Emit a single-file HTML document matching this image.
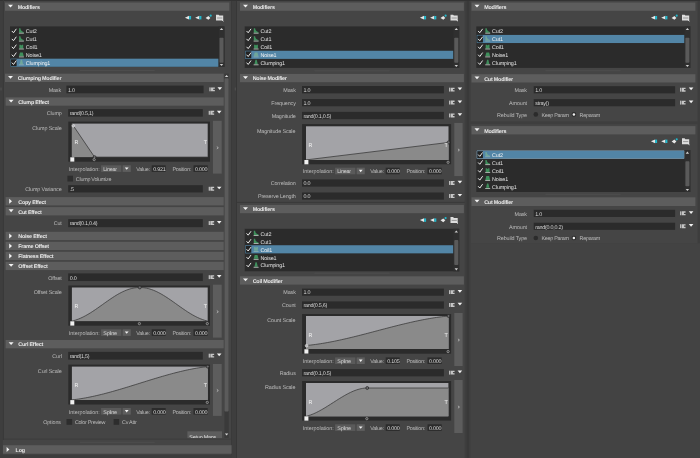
<!DOCTYPE html>
<html lang="en">
<head>
<meta charset="utf-8">
<title>XGen Modifiers</title>
<style>
html,body{margin:0;padding:0;background:#454545;}
body{width:700px;height:458px;overflow:hidden;position:relative;font-family:"Liberation Sans",sans-serif;}
#shapes{position:absolute;left:-6px;top:-6px;width:712px;height:470px;display:block;filter:blur(0.4px);}
#labels{position:absolute;left:0;top:0;width:700px;height:458px;overflow:hidden;will-change:transform;filter:blur(0.3px);}
.t{position:absolute;white-space:nowrap;line-height:8px;height:8px;font-size:5.4px;letter-spacing:-0.25px;
   font-family:"Liberation Sans",sans-serif;text-rendering:geometricPrecision;}
</style>
</head>
<body>
<svg id="shapes" width="712" height="470" viewBox="-6 -6 712 470">
<rect x="-6" y="-6" width="712" height="470" fill="#454545"/>
<rect x="-6" y="-6" width="712" height="7" fill="#333333"/>
<rect x="-6" y="1" width="8.7" height="463" fill="#3e3e3e"/>
<rect x="2.7" y="0" width="1.3" height="440" fill="#393939"/>
<rect x="231" y="1" width="6" height="463" fill="#3e3e3e"/>
<rect x="231" y="1" width="1" height="463" fill="#3a3a3a"/>
<rect x="236" y="1" width="1" height="463" fill="#373737"/>
<rect x="464.7" y="1" width="5.9" height="463" fill="#3e3e3e"/>
<rect x="466.8" y="1" width="2.2" height="463" fill="#393939"/>
<rect x="697.6" y="1" width="8.4" height="244" fill="#3d3d3d"/>
<rect x="234.8" y="87.5" width="0.8" height="3" fill="#585858"/>
<rect x="0.6" y="87.5" width="0.8" height="3" fill="#585858"/>
<rect x="5" y="2.5" width="224.3" height="8.3" fill="#5d5d5d"/>
<polygon points="8,4.75 13,4.75 10.5,7.55" fill="#f2f2f2"/>
<polygon points="184.9,17.7 189.1,15.8 189.1,19.6" fill="#e8e8e8"/>
<rect x="189.1" y="16" width="2" height="3.4" fill="#22b8cc"/>
<polygon points="195.2,17.7 199.4,15.8 199.4,19.6" fill="#e8e8e8"/>
<rect x="199.4" y="16" width="2" height="3.4" fill="#22b8cc"/>
<polygon points="205.6,17.9 208.4,16 210.4,17.9 208.4,19.8" fill="#e8e8e8"/>
<circle cx="210.7" cy="15.7" r="1.1" fill="#22b8cc" stroke="none" stroke-width="0.6"/>
<path d="M216 14.7 h2.6 l0.8 0.9 h3.8 v5 h-7.2 z" fill="#dddddd" stroke="none" stroke-width="0.6"/>
<path d="M217.1 18 h5.2" fill="none" stroke="#777" stroke-width="0.7"/>
<path d="M221.9 19.8 l1.6 1.4" fill="none" stroke="#eee" stroke-width="0.9"/>
<rect x="10" y="26.4" width="214.4" height="40.6" fill="#2b2b2b"/>
<path d="M12.1 31.26 l1.4 1.5 l2.6 -3.6" fill="none" stroke="#f4f4f4" stroke-width="0.95" stroke-linecap="round" stroke-linejoin="round"/>
<path d="M19.1 28.36 h1.3 q0.4 3.2 3.4 3.8 v0.5 h-4.7 z" fill="#3f8f5c" stroke="none" stroke-width="0.6"/>
<rect x="18.9" y="32.76" width="5" height="0.8" fill="#c4ccc6"/>
<path d="M12.1 39.18 l1.4 1.5 l2.6 -3.6" fill="none" stroke="#f4f4f4" stroke-width="0.95" stroke-linecap="round" stroke-linejoin="round"/>
<path d="M19.1 36.28 h1.3 q0.4 3.2 3.4 3.8 v0.5 h-4.7 z" fill="#3f8f5c" stroke="none" stroke-width="0.6"/>
<rect x="18.9" y="40.68" width="5" height="0.8" fill="#c4ccc6"/>
<path d="M12.1 47.1 l1.4 1.5 l2.6 -3.6" fill="none" stroke="#f4f4f4" stroke-width="0.95" stroke-linecap="round" stroke-linejoin="round"/>
<path d="M19.4 44.7 h1.2 l0.7 0.9 l0.7 -0.9 h1.2 v3.7 h-3.8 z" fill="#3f8f5c" stroke="none" stroke-width="0.6"/>
<rect x="18.9" y="48.6" width="5" height="0.8" fill="#c4ccc6"/>
<path d="M12.1 55.02 l1.4 1.5 l2.6 -3.6" fill="none" stroke="#f4f4f4" stroke-width="0.95" stroke-linecap="round" stroke-linejoin="round"/>
<polygon points="20,52.52 22.8,52.52 23.8,56.32 19,56.32" fill="#3f8f5c"/>
<rect x="18.9" y="56.52" width="5" height="0.8" fill="#c4ccc6"/>
<rect x="10.5" y="58.68" width="208.1" height="8.12" fill="#5285a6"/>
<rect x="11" y="59.28" width="5.6" height="6.92" fill="#222222"/>
<path d="M12.1 62.94 l1.4 1.5 l2.6 -3.6" fill="none" stroke="#f4f4f4" stroke-width="0.95" stroke-linecap="round" stroke-linejoin="round"/>
<polygon points="20.8,59.84 22,59.84 23.1,64.24 19.7,64.24" fill="#6fa79a"/>
<rect x="18.9" y="64.44" width="5" height="0.8" fill="#8fb0b4"/>
<rect x="218.6" y="26.4" width="5.8" height="40.6" fill="#2f2f2f"/>
<polygon points="219.8,30.1 223.2,30.1 221.5,28" fill="#d0d0d0"/>
<polygon points="219.8,64 223.2,64 221.5,66.1" fill="#d0d0d0"/>
<rect x="219.5" y="37.7" width="4" height="25" fill="#5a5a5a" rx="0.8"/>
<rect x="79.7" y="69.9" width="75" height="1" fill="#4e4e4e"/>
<rect x="224.4" y="73.6" width="4.3" height="364.4" fill="#3a3a3a"/>
<rect x="224.5" y="78.2" width="4.1" height="333.4" fill="#5b5b5b" rx="0.8"/>
<polygon points="224.9,76.9 228.3,76.9 226.6,74.9" fill="#d8d8d8"/>
<polygon points="224.9,433.4 228.3,433.4 226.6,435.6" fill="#d8d8d8"/>
<rect x="5" y="73.7" width="218.7" height="8.3" fill="#5d5d5d"/>
<polygon points="8,75.95 13,75.95 10.5,78.75" fill="#f2f2f2"/>
<rect x="66.4" y="85.6" width="137.2" height="7.65" fill="#2b2b2b"/>
<rect x="209.4" y="87.4" width="1.2" height="3.9" fill="#c6c6c6"/>
<path d="M211.05 87.4 h3.8 v1.3 h-1.6 v1.3 h1.6 v1.3 h-3.8 z" fill="#c6c6c6" stroke="none" stroke-width="0.6"/>
<polygon points="217.5,87.25 222.1,87.25 219.8,89.95" fill="#f2f2f2"/>
<rect x="5.6" y="97.4" width="218.1" height="8.3" fill="#5d5d5d"/>
<polygon points="8.6,99.65 13.6,99.65 11.1,102.45" fill="#f2f2f2"/>
<rect x="68.2" y="109.1" width="134.6" height="7.55" fill="#2b2b2b"/>
<rect x="208.7" y="110.85" width="1.2" height="3.9" fill="#c6c6c6"/>
<path d="M210.35 110.85 h3.8 v1.3 h-1.6 v1.3 h1.6 v1.3 h-3.8 z" fill="#c6c6c6" stroke="none" stroke-width="0.6"/>
<polygon points="216.9,110.7 221.5,110.7 219.2,113.4" fill="#f2f2f2"/>
<rect x="68.3" y="121.6" width="141.7" height="40.1" fill="#2b2b2b"/>
<rect x="71.9" y="123.6" width="135.8" height="33.5" fill="#a3a3a7"/>
<polygon points="71.9,123.6 94.58,157.1 207.7,157.1 207.7,157.1 71.9,157.1" fill="#8a8a8a"/>
<polyline points="71.9,123.6 94.58,157.1 207.7,157.1" fill="none" stroke="#2e2e2e" stroke-width="0.7"/>
<circle cx="73.3" cy="125.8" r="1.35" fill="#b9b9bc" stroke="#e4e4e4" stroke-width="0.6"/>
<circle cx="94.58" cy="157.1" r="1.45" fill="#6e6e70" stroke="#242424" stroke-width="0.7"/>
<rect x="70.3" y="157.3" width="4" height="4.3" fill="#f0f0f0"/>
<circle cx="94.18" cy="159.6" r="1.15" fill="#3a3a3a" stroke="#c8c8c8" stroke-width="0.55"/>
<rect x="212.9" y="120.8" width="8.8" height="52.8" fill="#5d5d5d"/>
<path d="M216.8 146.6 l1.5 1.15 l-1.5 1.15" fill="none" stroke="#e0e0e0" stroke-width="0.6"/>
<rect x="101.1" y="165.3" width="20.2" height="6.6" fill="#5a5a5a"/>
<rect x="121.3" y="165.3" width="1.6" height="6.6" fill="#4e4e4e"/>
<rect x="122.9" y="165.3" width="7.9" height="6.6" fill="#5e5e5e"/>
<polygon points="124.8,167.4 128.6,167.4 126.7,169.8" fill="#f2f2f2"/>
<rect x="151.7" y="165.3" width="14" height="6.6" fill="#2b2b2b"/>
<rect x="193.5" y="165.3" width="14.2" height="6.6" fill="#2b2b2b"/>
<rect x="67.4" y="175.7" width="5.6" height="5.8" fill="#2d2d2d"/>
<rect x="68.2" y="185.2" width="134.6" height="7.25" fill="#2b2b2b"/>
<rect x="208.7" y="186.8" width="1.2" height="3.9" fill="#c6c6c6"/>
<path d="M210.35 186.8 h3.8 v1.3 h-1.6 v1.3 h1.6 v1.3 h-3.8 z" fill="#c6c6c6" stroke="none" stroke-width="0.6"/>
<polygon points="216.9,186.65 221.5,186.65 219.2,189.35" fill="#f2f2f2"/>
<rect x="5.6" y="197.1" width="218.1" height="8.3" fill="#5d5d5d"/>
<polygon points="9.2,198.75 12,201.25 9.2,203.75" fill="#f2f2f2"/>
<rect x="5.6" y="207.1" width="218.1" height="8.3" fill="#5d5d5d"/>
<polygon points="8.6,209.35 13.6,209.35 11.1,212.15" fill="#f2f2f2"/>
<rect x="68.2" y="219.1" width="134.6" height="8.05" fill="#2b2b2b"/>
<rect x="208.7" y="221.1" width="1.2" height="3.9" fill="#c6c6c6"/>
<path d="M210.35 221.1 h3.8 v1.3 h-1.6 v1.3 h1.6 v1.3 h-3.8 z" fill="#c6c6c6" stroke="none" stroke-width="0.6"/>
<polygon points="216.9,220.95 221.5,220.95 219.2,223.65" fill="#f2f2f2"/>
<rect x="5.6" y="231.8" width="218.1" height="8.3" fill="#5d5d5d"/>
<polygon points="9.2,233.45 12,235.95 9.2,238.45" fill="#f2f2f2"/>
<rect x="5.6" y="241.8" width="218.1" height="8.3" fill="#5d5d5d"/>
<polygon points="9.2,243.45 12,245.95 9.2,248.45" fill="#f2f2f2"/>
<rect x="5.6" y="251.8" width="218.1" height="8.3" fill="#5d5d5d"/>
<polygon points="9.2,253.45 12,255.95 9.2,258.45" fill="#f2f2f2"/>
<rect x="5.6" y="261.8" width="218.1" height="8.3" fill="#5d5d5d"/>
<polygon points="8.6,264.05 13.6,264.05 11.1,266.85" fill="#f2f2f2"/>
<rect x="68.2" y="273.4" width="134.6" height="7.65" fill="#2b2b2b"/>
<rect x="208.7" y="275.2" width="1.2" height="3.9" fill="#c6c6c6"/>
<path d="M210.35 275.2 h3.8 v1.3 h-1.6 v1.3 h1.6 v1.3 h-3.8 z" fill="#c6c6c6" stroke="none" stroke-width="0.6"/>
<polygon points="216.9,275.05 221.5,275.05 219.2,277.75" fill="#f2f2f2"/>
<rect x="68.3" y="285.5" width="141.7" height="40.2" fill="#2b2b2b"/>
<rect x="71.9" y="287.5" width="135.8" height="33.6" fill="#a3a3a7"/>
<polygon points="71.9,321.1 73.6,320.67 75.29,320.16 76.99,319.59 78.69,318.95 80.39,318.24 82.08,317.47 83.78,316.63 85.48,315.74 87.18,314.79 88.88,313.8 90.57,312.76 92.27,311.68 93.97,310.56 95.66,309.41 97.36,308.24 99.06,307.05 100.76,305.84 102.45,304.63 104.15,303.42 105.85,302.21 107.55,301.02 109.25,299.84 110.94,298.68 112.64,297.55 114.34,296.46 116.03,295.41 117.73,294.4 119.43,293.45 121.13,292.55 122.82,291.71 124.52,290.94 126.22,290.24 127.92,289.61 129.62,289.06 131.31,288.59 133.01,288.2 134.71,287.89 136.4,287.68 138.1,287.54 139.8,287.5 141.5,287.54 143.19,287.68 144.89,287.89 146.59,288.2 148.29,288.59 149.98,289.06 151.68,289.61 153.38,290.24 155.08,290.94 156.77,291.71 158.47,292.55 160.17,293.45 161.87,294.4 163.56,295.41 165.26,296.46 166.96,297.55 168.66,298.68 170.35,299.84 172.05,301.02 173.75,302.21 175.45,303.42 177.15,304.63 178.84,305.84 180.54,307.05 182.24,308.24 183.94,309.41 185.63,310.56 187.33,311.68 189.03,312.76 190.73,313.8 192.42,314.79 194.12,315.74 195.82,316.63 197.52,317.47 199.21,318.24 200.91,318.95 202.61,319.59 204.31,320.16 206,320.67 207.7,321.1 207.7,321.1 71.9,321.1" fill="#8a8a8a"/>
<polyline points="71.9,321.1 73.6,320.67 75.29,320.16 76.99,319.59 78.69,318.95 80.39,318.24 82.08,317.47 83.78,316.63 85.48,315.74 87.18,314.79 88.88,313.8 90.57,312.76 92.27,311.68 93.97,310.56 95.66,309.41 97.36,308.24 99.06,307.05 100.76,305.84 102.45,304.63 104.15,303.42 105.85,302.21 107.55,301.02 109.25,299.84 110.94,298.68 112.64,297.55 114.34,296.46 116.03,295.41 117.73,294.4 119.43,293.45 121.13,292.55 122.82,291.71 124.52,290.94 126.22,290.24 127.92,289.61 129.62,289.06 131.31,288.59 133.01,288.2 134.71,287.89 136.4,287.68 138.1,287.54 139.8,287.5 141.5,287.54 143.19,287.68 144.89,287.89 146.59,288.2 148.29,288.59 149.98,289.06 151.68,289.61 153.38,290.24 155.08,290.94 156.77,291.71 158.47,292.55 160.17,293.45 161.87,294.4 163.56,295.41 165.26,296.46 166.96,297.55 168.66,298.68 170.35,299.84 172.05,301.02 173.75,302.21 175.45,303.42 177.15,304.63 178.84,305.84 180.54,307.05 182.24,308.24 183.94,309.41 185.63,310.56 187.33,311.68 189.03,312.76 190.73,313.8 192.42,314.79 194.12,315.74 195.82,316.63 197.52,317.47 199.21,318.24 200.91,318.95 202.61,319.59 204.31,320.16 206,320.67 207.7,321.1" fill="none" stroke="#2e2e2e" stroke-width="0.7"/>
<circle cx="139.8" cy="287.5" r="1.45" fill="#6e6e70" stroke="#242424" stroke-width="0.7"/>
<rect x="70.3" y="321.3" width="4" height="4.3" fill="#f0f0f0"/>
<circle cx="139.4" cy="323.6" r="1.15" fill="#3a3a3a" stroke="#c8c8c8" stroke-width="0.55"/>
<circle cx="207.3" cy="323.6" r="1.15" fill="#3a3a3a" stroke="#c8c8c8" stroke-width="0.55"/>
<rect x="212.9" y="284.7" width="8.8" height="52.9" fill="#5d5d5d"/>
<path d="M216.8 310.55 l1.5 1.15 l-1.5 1.15" fill="none" stroke="#e0e0e0" stroke-width="0.6"/>
<rect x="101.1" y="329.3" width="20.2" height="6.6" fill="#5a5a5a"/>
<rect x="121.3" y="329.3" width="1.6" height="6.6" fill="#4e4e4e"/>
<rect x="122.9" y="329.3" width="7.9" height="6.6" fill="#5e5e5e"/>
<polygon points="124.8,331.4 128.6,331.4 126.7,333.8" fill="#f2f2f2"/>
<rect x="151.7" y="329.3" width="14" height="6.6" fill="#2b2b2b"/>
<rect x="193.5" y="329.3" width="14.2" height="6.6" fill="#2b2b2b"/>
<rect x="5.6" y="340" width="218.1" height="8.3" fill="#5d5d5d"/>
<polygon points="8.6,342.25 13.6,342.25 11.1,345.05" fill="#f2f2f2"/>
<rect x="68.2" y="351.9" width="134.6" height="7.65" fill="#2b2b2b"/>
<rect x="208.7" y="353.7" width="1.2" height="3.9" fill="#c6c6c6"/>
<path d="M210.35 353.7 h3.8 v1.3 h-1.6 v1.3 h1.6 v1.3 h-3.8 z" fill="#c6c6c6" stroke="none" stroke-width="0.6"/>
<polygon points="216.9,353.55 221.5,353.55 219.2,356.25" fill="#f2f2f2"/>
<rect x="68.3" y="364.6" width="141.7" height="39.9" fill="#2b2b2b"/>
<rect x="71.9" y="366.6" width="135.8" height="33.3" fill="#a3a3a7"/>
<polygon points="71.9,399.9 74.16,399.64 76.43,399.34 78.69,399.02 80.95,398.67 83.22,398.29 85.48,397.89 87.74,397.46 90.01,397.01 92.27,396.54 94.53,396.05 96.8,395.53 99.06,395 101.32,394.45 103.59,393.88 105.85,393.29 108.11,392.69 110.38,392.08 112.64,391.45 114.9,390.81 117.17,390.16 119.43,389.49 121.69,388.82 123.96,388.15 126.22,387.46 128.48,386.77 130.75,386.07 133.01,385.37 135.27,384.66 137.54,383.96 139.8,383.25 142.06,382.54 144.33,381.84 146.59,381.13 148.85,380.43 151.12,379.73 153.38,379.04 155.64,378.35 157.91,377.68 160.17,377.01 162.43,376.34 164.7,375.69 166.96,375.05 169.22,374.42 171.49,373.81 173.75,373.21 176.01,372.62 178.28,372.05 180.54,371.5 182.8,370.97 185.07,370.45 187.33,369.96 189.59,369.49 191.86,369.04 194.12,368.61 196.38,368.21 198.65,367.83 200.91,367.48 203.17,367.16 205.44,366.86 207.7,366.6 207.7,399.9 71.9,399.9" fill="#8a8a8a"/>
<polyline points="71.9,399.9 74.16,399.64 76.43,399.34 78.69,399.02 80.95,398.67 83.22,398.29 85.48,397.89 87.74,397.46 90.01,397.01 92.27,396.54 94.53,396.05 96.8,395.53 99.06,395 101.32,394.45 103.59,393.88 105.85,393.29 108.11,392.69 110.38,392.08 112.64,391.45 114.9,390.81 117.17,390.16 119.43,389.49 121.69,388.82 123.96,388.15 126.22,387.46 128.48,386.77 130.75,386.07 133.01,385.37 135.27,384.66 137.54,383.96 139.8,383.25 142.06,382.54 144.33,381.84 146.59,381.13 148.85,380.43 151.12,379.73 153.38,379.04 155.64,378.35 157.91,377.68 160.17,377.01 162.43,376.34 164.7,375.69 166.96,375.05 169.22,374.42 171.49,373.81 173.75,373.21 176.01,372.62 178.28,372.05 180.54,371.5 182.8,370.97 185.07,370.45 187.33,369.96 189.59,369.49 191.86,369.04 194.12,368.61 196.38,368.21 198.65,367.83 200.91,367.48 203.17,367.16 205.44,366.86 207.7,366.6" fill="none" stroke="#2e2e2e" stroke-width="0.7"/>
<circle cx="207.7" cy="366.6" r="1.45" fill="#6e6e70" stroke="#242424" stroke-width="0.7"/>
<rect x="70.3" y="400.1" width="4" height="4.3" fill="#f0f0f0"/>
<circle cx="207.3" cy="402.4" r="1.15" fill="#3a3a3a" stroke="#c8c8c8" stroke-width="0.55"/>
<rect x="212.9" y="364" width="8.8" height="51.9" fill="#5d5d5d"/>
<path d="M216.8 389.35 l1.5 1.15 l-1.5 1.15" fill="none" stroke="#e0e0e0" stroke-width="0.6"/>
<rect x="101.1" y="408" width="20.2" height="6.6" fill="#5a5a5a"/>
<rect x="121.3" y="408" width="1.6" height="6.6" fill="#4e4e4e"/>
<rect x="122.9" y="408" width="7.9" height="6.6" fill="#5e5e5e"/>
<polygon points="124.8,410.1 128.6,410.1 126.7,412.5" fill="#f2f2f2"/>
<rect x="151.7" y="408" width="14" height="6.6" fill="#2b2b2b"/>
<rect x="193.5" y="408" width="14.2" height="6.6" fill="#2b2b2b"/>
<rect x="66.5" y="419" width="5.6" height="5.8" fill="#2d2d2d"/>
<rect x="113.6" y="419" width="5.6" height="5.8" fill="#2d2d2d"/>
<rect x="187.4" y="431.3" width="34.6" height="6.9" fill="#5d5d5d"/>
<rect x="4" y="438.6" width="226.6" height="1" fill="#3c3c3c"/>
<rect x="79.7" y="441.8" width="75" height="1" fill="#4e4e4e"/>
<rect x="3" y="445.2" width="228.6" height="8.5" fill="#5d5d5d"/>
<polygon points="6.6,446.95 9.4,449.45 6.6,451.95" fill="#f2f2f2"/>
<rect x="-6" y="454.6" width="238" height="9.4" fill="#3c3c3c"/>
<rect x="240" y="2.5" width="223.9" height="8.3" fill="#5d5d5d"/>
<polygon points="243,4.75 248,4.75 245.5,7.55" fill="#f2f2f2"/>
<polygon points="419.9,17.7 424.1,15.8 424.1,19.6" fill="#e8e8e8"/>
<rect x="424.1" y="16" width="2" height="3.4" fill="#22b8cc"/>
<polygon points="430.1,17.7 434.3,15.8 434.3,19.6" fill="#e8e8e8"/>
<rect x="434.3" y="16" width="2" height="3.4" fill="#22b8cc"/>
<polygon points="440.5,17.9 443.3,16 445.3,17.9 443.3,19.8" fill="#e8e8e8"/>
<circle cx="445.6" cy="15.7" r="1.1" fill="#22b8cc" stroke="none" stroke-width="0.6"/>
<path d="M450.5 14.7 h2.6 l0.8 0.9 h3.8 v5 h-7.2 z" fill="#dddddd" stroke="none" stroke-width="0.6"/>
<path d="M451.6 18 h5.2" fill="none" stroke="#777" stroke-width="0.7"/>
<path d="M456.4 19.8 l1.6 1.4" fill="none" stroke="#eee" stroke-width="0.9"/>
<rect x="244.7" y="26.4" width="214.5" height="41.5" fill="#2b2b2b"/>
<path d="M246.8 31.26 l1.4 1.5 l2.6 -3.6" fill="none" stroke="#f4f4f4" stroke-width="0.95" stroke-linecap="round" stroke-linejoin="round"/>
<path d="M253.8 28.36 h1.3 q0.4 3.2 3.4 3.8 v0.5 h-4.7 z" fill="#3f8f5c" stroke="none" stroke-width="0.6"/>
<rect x="253.6" y="32.76" width="5" height="0.8" fill="#c4ccc6"/>
<path d="M246.8 39.18 l1.4 1.5 l2.6 -3.6" fill="none" stroke="#f4f4f4" stroke-width="0.95" stroke-linecap="round" stroke-linejoin="round"/>
<path d="M253.8 36.28 h1.3 q0.4 3.2 3.4 3.8 v0.5 h-4.7 z" fill="#3f8f5c" stroke="none" stroke-width="0.6"/>
<rect x="253.6" y="40.68" width="5" height="0.8" fill="#c4ccc6"/>
<path d="M246.8 47.1 l1.4 1.5 l2.6 -3.6" fill="none" stroke="#f4f4f4" stroke-width="0.95" stroke-linecap="round" stroke-linejoin="round"/>
<path d="M254.1 44.7 h1.2 l0.7 0.9 l0.7 -0.9 h1.2 v3.7 h-3.8 z" fill="#3f8f5c" stroke="none" stroke-width="0.6"/>
<rect x="253.6" y="48.6" width="5" height="0.8" fill="#c4ccc6"/>
<rect x="245.2" y="50.76" width="208.2" height="8.12" fill="#5285a6"/>
<rect x="245.7" y="51.36" width="5.6" height="6.92" fill="#222222"/>
<path d="M246.8 55.02 l1.4 1.5 l2.6 -3.6" fill="none" stroke="#f4f4f4" stroke-width="0.95" stroke-linecap="round" stroke-linejoin="round"/>
<polygon points="254.7,52.52 257.5,52.52 258.5,56.32 253.7,56.32" fill="#6fa79a"/>
<rect x="253.6" y="56.52" width="5" height="0.8" fill="#8fb0b4"/>
<path d="M246.8 62.94 l1.4 1.5 l2.6 -3.6" fill="none" stroke="#f4f4f4" stroke-width="0.95" stroke-linecap="round" stroke-linejoin="round"/>
<polygon points="255.5,59.84 256.7,59.84 257.8,64.24 254.4,64.24" fill="#3f8f5c"/>
<rect x="253.6" y="64.44" width="5" height="0.8" fill="#c4ccc6"/>
<rect x="453.4" y="26.4" width="5.8" height="41.5" fill="#2f2f2f"/>
<polygon points="454.6,30.1 458,30.1 456.3,28" fill="#d0d0d0"/>
<polygon points="454.6,64.9 458,64.9 456.3,67" fill="#d0d0d0"/>
<rect x="454.3" y="37.7" width="4" height="25" fill="#5a5a5a" rx="0.8"/>
<rect x="314.5" y="70.3" width="75" height="1" fill="#4e4e4e"/>
<rect x="240" y="73.9" width="223.9" height="8.3" fill="#5d5d5d"/>
<polygon points="243,76.15 248,76.15 245.5,78.95" fill="#f2f2f2"/>
<rect x="302" y="86" width="141.9" height="7.35" fill="#2b2b2b"/>
<rect x="449.1" y="87.65" width="1.2" height="3.9" fill="#c6c6c6"/>
<path d="M450.75 87.65 h3.8 v1.3 h-1.6 v1.3 h1.6 v1.3 h-3.8 z" fill="#c6c6c6" stroke="none" stroke-width="0.6"/>
<polygon points="457.6,87.5 462.2,87.5 459.9,90.2" fill="#f2f2f2"/>
<rect x="302" y="99" width="141.9" height="7.25" fill="#2b2b2b"/>
<rect x="449.1" y="100.6" width="1.2" height="3.9" fill="#c6c6c6"/>
<path d="M450.75 100.6 h3.8 v1.3 h-1.6 v1.3 h1.6 v1.3 h-3.8 z" fill="#c6c6c6" stroke="none" stroke-width="0.6"/>
<polygon points="457.6,100.45 462.2,100.45 459.9,103.15" fill="#f2f2f2"/>
<rect x="302" y="111.9" width="141.9" height="7.25" fill="#2b2b2b"/>
<rect x="449.1" y="113.5" width="1.2" height="3.9" fill="#c6c6c6"/>
<path d="M450.75 113.5 h3.8 v1.3 h-1.6 v1.3 h1.6 v1.3 h-3.8 z" fill="#c6c6c6" stroke="none" stroke-width="0.6"/>
<polygon points="457.6,113.35 462.2,113.35 459.9,116.05" fill="#f2f2f2"/>
<rect x="302.1" y="124.1" width="149" height="40.2" fill="#2b2b2b"/>
<rect x="306" y="126.3" width="142.5" height="33.6" fill="#a3a3a7"/>
<polygon points="306,159.9 448.5,142.43 448.5,159.9 306,159.9" fill="#8a8a8a"/>
<polyline points="306,159.9 448.5,142.43" fill="none" stroke="#2e2e2e" stroke-width="0.7"/>
<circle cx="448.5" cy="142.43" r="1.45" fill="#6e6e70" stroke="#242424" stroke-width="0.7"/>
<rect x="304.4" y="160" width="4" height="4.3" fill="#f0f0f0"/>
<circle cx="448.1" cy="162.3" r="1.15" fill="#3a3a3a" stroke="#c8c8c8" stroke-width="0.55"/>
<rect x="454.3" y="122.9" width="8.3" height="53.2" fill="#5d5d5d"/>
<path d="M457.95 148.9 l1.5 1.15 l-1.5 1.15" fill="none" stroke="#e0e0e0" stroke-width="0.6"/>
<rect x="335.1" y="167.7" width="20.2" height="6.6" fill="#5a5a5a"/>
<rect x="355.3" y="167.7" width="1.6" height="6.6" fill="#4e4e4e"/>
<rect x="356.9" y="167.7" width="7.9" height="6.6" fill="#5e5e5e"/>
<polygon points="358.8,169.8 362.6,169.8 360.7,172.2" fill="#f2f2f2"/>
<rect x="385.7" y="167.7" width="14" height="6.6" fill="#2b2b2b"/>
<rect x="427.5" y="167.7" width="14.2" height="6.6" fill="#2b2b2b"/>
<rect x="302" y="179.4" width="141.9" height="7.25" fill="#2b2b2b"/>
<rect x="449.1" y="181" width="1.2" height="3.9" fill="#c6c6c6"/>
<path d="M450.75 181 h3.8 v1.3 h-1.6 v1.3 h1.6 v1.3 h-3.8 z" fill="#c6c6c6" stroke="none" stroke-width="0.6"/>
<polygon points="457.6,180.85 462.2,180.85 459.9,183.55" fill="#f2f2f2"/>
<rect x="302" y="192.5" width="141.9" height="7.15" fill="#2b2b2b"/>
<rect x="449.1" y="194.05" width="1.2" height="3.9" fill="#c6c6c6"/>
<path d="M450.75 194.05 h3.8 v1.3 h-1.6 v1.3 h1.6 v1.3 h-3.8 z" fill="#c6c6c6" stroke="none" stroke-width="0.6"/>
<polygon points="457.6,193.9 462.2,193.9 459.9,196.6" fill="#f2f2f2"/>
<rect x="237" y="201.9" width="227.8" height="0.9" fill="#393939"/>
<rect x="240" y="204.9" width="223.9" height="8.3" fill="#5d5d5d"/>
<polygon points="243,207.15 248,207.15 245.5,209.95" fill="#f2f2f2"/>
<polygon points="419.9,220.1 424.1,218.2 424.1,222" fill="#e8e8e8"/>
<rect x="424.1" y="218.4" width="2" height="3.4" fill="#22b8cc"/>
<polygon points="430.1,220.1 434.3,218.2 434.3,222" fill="#e8e8e8"/>
<rect x="434.3" y="218.4" width="2" height="3.4" fill="#22b8cc"/>
<polygon points="440.5,220.3 443.3,218.4 445.3,220.3 443.3,222.2" fill="#e8e8e8"/>
<circle cx="445.6" cy="218.1" r="1.1" fill="#22b8cc" stroke="none" stroke-width="0.6"/>
<path d="M450.5 217.1 h2.6 l0.8 0.9 h3.8 v5 h-7.2 z" fill="#dddddd" stroke="none" stroke-width="0.6"/>
<path d="M451.6 220.4 h5.2" fill="none" stroke="#777" stroke-width="0.7"/>
<path d="M456.4 222.2 l1.6 1.4" fill="none" stroke="#eee" stroke-width="0.9"/>
<rect x="244.7" y="228.8" width="214.5" height="42.5" fill="#2b2b2b"/>
<path d="M246.8 233.66 l1.4 1.5 l2.6 -3.6" fill="none" stroke="#f4f4f4" stroke-width="0.95" stroke-linecap="round" stroke-linejoin="round"/>
<path d="M253.8 230.76 h1.3 q0.4 3.2 3.4 3.8 v0.5 h-4.7 z" fill="#3f8f5c" stroke="none" stroke-width="0.6"/>
<rect x="253.6" y="235.16" width="5" height="0.8" fill="#c4ccc6"/>
<path d="M246.8 241.58 l1.4 1.5 l2.6 -3.6" fill="none" stroke="#f4f4f4" stroke-width="0.95" stroke-linecap="round" stroke-linejoin="round"/>
<path d="M253.8 238.68 h1.3 q0.4 3.2 3.4 3.8 v0.5 h-4.7 z" fill="#3f8f5c" stroke="none" stroke-width="0.6"/>
<rect x="253.6" y="243.08" width="5" height="0.8" fill="#c4ccc6"/>
<rect x="245.2" y="245.24" width="208.2" height="8.12" fill="#5285a6"/>
<rect x="245.7" y="245.84" width="5.6" height="6.92" fill="#222222"/>
<path d="M246.8 249.5 l1.4 1.5 l2.6 -3.6" fill="none" stroke="#f4f4f4" stroke-width="0.95" stroke-linecap="round" stroke-linejoin="round"/>
<path d="M254.1 247.1 h1.2 l0.7 0.9 l0.7 -0.9 h1.2 v3.7 h-3.8 z" fill="#6fa79a" stroke="none" stroke-width="0.6"/>
<rect x="253.6" y="251" width="5" height="0.8" fill="#8fb0b4"/>
<path d="M246.8 257.42 l1.4 1.5 l2.6 -3.6" fill="none" stroke="#f4f4f4" stroke-width="0.95" stroke-linecap="round" stroke-linejoin="round"/>
<polygon points="254.7,254.92 257.5,254.92 258.5,258.72 253.7,258.72" fill="#3f8f5c"/>
<rect x="253.6" y="258.92" width="5" height="0.8" fill="#c4ccc6"/>
<path d="M246.8 265.34 l1.4 1.5 l2.6 -3.6" fill="none" stroke="#f4f4f4" stroke-width="0.95" stroke-linecap="round" stroke-linejoin="round"/>
<polygon points="255.5,262.24 256.7,262.24 257.8,266.64 254.4,266.64" fill="#3f8f5c"/>
<rect x="253.6" y="266.84" width="5" height="0.8" fill="#c4ccc6"/>
<rect x="453.4" y="228.8" width="5.8" height="42.5" fill="#2f2f2f"/>
<polygon points="454.6,232.5 458,232.5 456.3,230.4" fill="#d0d0d0"/>
<polygon points="454.6,268.3 458,268.3 456.3,270.4" fill="#d0d0d0"/>
<rect x="454.3" y="240.1" width="4" height="25" fill="#5a5a5a" rx="0.8"/>
<rect x="314.5" y="272.7" width="75" height="1" fill="#4e4e4e"/>
<rect x="240" y="276.3" width="223.9" height="8.3" fill="#5d5d5d"/>
<polygon points="243,278.55 248,278.55 245.5,281.35" fill="#f2f2f2"/>
<rect x="302" y="288.6" width="141.9" height="7.15" fill="#2b2b2b"/>
<rect x="449.1" y="290.15" width="1.2" height="3.9" fill="#c6c6c6"/>
<path d="M450.75 290.15 h3.8 v1.3 h-1.6 v1.3 h1.6 v1.3 h-3.8 z" fill="#c6c6c6" stroke="none" stroke-width="0.6"/>
<polygon points="457.6,290 462.2,290 459.9,292.7" fill="#f2f2f2"/>
<rect x="302" y="301.4" width="141.9" height="7.25" fill="#2b2b2b"/>
<rect x="449.1" y="303" width="1.2" height="3.9" fill="#c6c6c6"/>
<path d="M450.75 303 h3.8 v1.3 h-1.6 v1.3 h1.6 v1.3 h-3.8 z" fill="#c6c6c6" stroke="none" stroke-width="0.6"/>
<polygon points="457.6,302.85 462.2,302.85 459.9,305.55" fill="#f2f2f2"/>
<rect x="302.1" y="314" width="149" height="39.7" fill="#2b2b2b"/>
<rect x="306" y="316" width="142.5" height="33" fill="#a3a3a7"/>
<polygon points="306,345.54 308.38,345.3 310.75,345.04 313.12,344.75 315.5,344.44 317.88,344.11 320.25,343.75 322.62,343.37 325,342.97 327.38,342.55 329.75,342.12 332.12,341.66 334.5,341.19 336.88,340.7 339.25,340.19 341.62,339.67 344,339.14 346.38,338.6 348.75,338.04 351.12,337.47 353.5,336.89 355.88,336.31 358.25,335.71 360.62,335.11 363,334.5 365.38,333.89 367.75,333.27 370.12,332.65 372.5,332.02 374.88,331.39 377.25,330.77 379.62,330.14 382,329.51 384.38,328.89 386.75,328.27 389.12,327.65 391.5,327.03 393.88,326.43 396.25,325.82 398.62,325.23 401,324.64 403.38,324.06 405.75,323.5 408.12,322.94 410.5,322.39 412.88,321.86 415.25,321.34 417.62,320.84 420,320.35 422.38,319.87 424.75,319.42 427.12,318.98 429.5,318.56 431.88,318.16 434.25,317.78 436.62,317.43 439,317.09 441.38,316.78 443.75,316.5 446.12,316.23 448.5,316 448.5,349 306,349" fill="#8a8a8a"/>
<polyline points="306,345.54 308.38,345.3 310.75,345.04 313.12,344.75 315.5,344.44 317.88,344.11 320.25,343.75 322.62,343.37 325,342.97 327.38,342.55 329.75,342.12 332.12,341.66 334.5,341.19 336.88,340.7 339.25,340.19 341.62,339.67 344,339.14 346.38,338.6 348.75,338.04 351.12,337.47 353.5,336.89 355.88,336.31 358.25,335.71 360.62,335.11 363,334.5 365.38,333.89 367.75,333.27 370.12,332.65 372.5,332.02 374.88,331.39 377.25,330.77 379.62,330.14 382,329.51 384.38,328.89 386.75,328.27 389.12,327.65 391.5,327.03 393.88,326.43 396.25,325.82 398.62,325.23 401,324.64 403.38,324.06 405.75,323.5 408.12,322.94 410.5,322.39 412.88,321.86 415.25,321.34 417.62,320.84 420,320.35 422.38,319.87 424.75,319.42 427.12,318.98 429.5,318.56 431.88,318.16 434.25,317.78 436.62,317.43 439,317.09 441.38,316.78 443.75,316.5 446.12,316.23 448.5,316" fill="none" stroke="#2e2e2e" stroke-width="0.7"/>
<circle cx="306.6" cy="345.74" r="1.35" fill="#b9b9bc" stroke="#e4e4e4" stroke-width="0.6"/>
<circle cx="448.5" cy="316" r="1.45" fill="#6e6e70" stroke="#242424" stroke-width="0.7"/>
<rect x="304.4" y="349.25" width="4" height="4.3" fill="#f0f0f0"/>
<circle cx="448.1" cy="351.55" r="1.15" fill="#3a3a3a" stroke="#c8c8c8" stroke-width="0.55"/>
<rect x="454.3" y="313" width="8.3" height="53" fill="#5d5d5d"/>
<path d="M457.95 338.9 l1.5 1.15 l-1.5 1.15" fill="none" stroke="#e0e0e0" stroke-width="0.6"/>
<rect x="335.1" y="357.4" width="20.2" height="6.6" fill="#5a5a5a"/>
<rect x="355.3" y="357.4" width="1.6" height="6.6" fill="#4e4e4e"/>
<rect x="356.9" y="357.4" width="7.9" height="6.6" fill="#5e5e5e"/>
<polygon points="358.8,359.5 362.6,359.5 360.7,361.9" fill="#f2f2f2"/>
<rect x="385.7" y="357.4" width="14" height="6.6" fill="#2b2b2b"/>
<rect x="427.5" y="357.4" width="14.2" height="6.6" fill="#2b2b2b"/>
<rect x="302" y="369.1" width="141.9" height="7.25" fill="#2b2b2b"/>
<rect x="449.1" y="370.7" width="1.2" height="3.9" fill="#c6c6c6"/>
<path d="M450.75 370.7 h3.8 v1.3 h-1.6 v1.3 h1.6 v1.3 h-3.8 z" fill="#c6c6c6" stroke="none" stroke-width="0.6"/>
<polygon points="457.6,370.55 462.2,370.55 459.9,373.25" fill="#f2f2f2"/>
<rect x="302.1" y="381" width="149" height="39.6" fill="#2b2b2b"/>
<rect x="306" y="383" width="142.4" height="33.3" fill="#a3a3a7"/>
<polygon points="306,416.3 307.53,415.91 309.06,415.46 310.59,414.94 312.12,414.36 313.65,413.73 315.18,413.05 316.72,412.32 318.25,411.54 319.78,410.73 321.31,409.89 322.84,409.01 324.37,408.11 325.9,407.18 327.43,406.23 328.96,405.27 330.49,404.3 332.02,403.32 333.55,402.34 335.09,401.36 336.62,400.38 338.15,399.41 339.68,398.46 341.21,397.52 342.74,396.6 344.27,395.71 345.8,394.84 347.33,394.01 348.86,393.22 350.39,392.46 351.92,391.75 353.45,391.09 354.99,390.49 356.52,389.93 358.05,389.44 359.58,389.02 361.11,388.66 362.64,388.38 364.17,388.17 365.7,388.04 367.23,388 448.4,388 448.4,416.3 306,416.3" fill="#8a8a8a"/>
<polyline points="306,416.3 307.53,415.91 309.06,415.46 310.59,414.94 312.12,414.36 313.65,413.73 315.18,413.05 316.72,412.32 318.25,411.54 319.78,410.73 321.31,409.89 322.84,409.01 324.37,408.11 325.9,407.18 327.43,406.23 328.96,405.27 330.49,404.3 332.02,403.32 333.55,402.34 335.09,401.36 336.62,400.38 338.15,399.41 339.68,398.46 341.21,397.52 342.74,396.6 344.27,395.71 345.8,394.84 347.33,394.01 348.86,393.22 350.39,392.46 351.92,391.75 353.45,391.09 354.99,390.49 356.52,389.93 358.05,389.44 359.58,389.02 361.11,388.66 362.64,388.38 364.17,388.17 365.7,388.04 367.23,388 448.4,388" fill="none" stroke="#2e2e2e" stroke-width="0.7"/>
<circle cx="367.23" cy="388" r="1.45" fill="#6e6e70" stroke="#242424" stroke-width="0.7"/>
<rect x="304.4" y="416.35" width="4" height="4.3" fill="#f0f0f0"/>
<circle cx="366.83" cy="418.65" r="1.15" fill="#3a3a3a" stroke="#c8c8c8" stroke-width="0.55"/>
<rect x="454.3" y="380" width="8.3" height="53" fill="#5d5d5d"/>
<path d="M457.95 405.9 l1.5 1.15 l-1.5 1.15" fill="none" stroke="#e0e0e0" stroke-width="0.6"/>
<rect x="335.1" y="424.3" width="20.2" height="6.6" fill="#5a5a5a"/>
<rect x="355.3" y="424.3" width="1.6" height="6.6" fill="#4e4e4e"/>
<rect x="356.9" y="424.3" width="7.9" height="6.6" fill="#5e5e5e"/>
<polygon points="358.8,426.4 362.6,426.4 360.7,428.8" fill="#f2f2f2"/>
<rect x="385.7" y="424.3" width="14" height="6.6" fill="#2b2b2b"/>
<rect x="427.5" y="424.3" width="14.2" height="6.6" fill="#2b2b2b"/>
<rect x="471.5" y="2.5" width="223.9" height="8.3" fill="#5d5d5d"/>
<polygon points="474.5,4.75 479.5,4.75 477,7.55" fill="#f2f2f2"/>
<polygon points="650.9,17.7 655.1,15.8 655.1,19.6" fill="#e8e8e8"/>
<rect x="655.1" y="16" width="2" height="3.4" fill="#22b8cc"/>
<polygon points="661.2,17.7 665.4,15.8 665.4,19.6" fill="#e8e8e8"/>
<rect x="665.4" y="16" width="2" height="3.4" fill="#22b8cc"/>
<polygon points="671.6,17.9 674.4,16 676.4,17.9 674.4,19.8" fill="#e8e8e8"/>
<circle cx="676.7" cy="15.7" r="1.1" fill="#22b8cc" stroke="none" stroke-width="0.6"/>
<path d="M682 14.7 h2.6 l0.8 0.9 h3.8 v5 h-7.2 z" fill="#dddddd" stroke="none" stroke-width="0.6"/>
<path d="M683.1 18 h5.2" fill="none" stroke="#777" stroke-width="0.7"/>
<path d="M687.9 19.8 l1.6 1.4" fill="none" stroke="#eee" stroke-width="0.9"/>
<rect x="476.3" y="26.4" width="214" height="41.5" fill="#2b2b2b"/>
<path d="M478.4 31.26 l1.4 1.5 l2.6 -3.6" fill="none" stroke="#f4f4f4" stroke-width="0.95" stroke-linecap="round" stroke-linejoin="round"/>
<path d="M485.4 28.36 h1.3 q0.4 3.2 3.4 3.8 v0.5 h-4.7 z" fill="#3f8f5c" stroke="none" stroke-width="0.6"/>
<rect x="485.2" y="32.76" width="5" height="0.8" fill="#c4ccc6"/>
<rect x="476.8" y="34.92" width="207.7" height="8.12" fill="#5285a6"/>
<rect x="477.3" y="35.52" width="5.6" height="6.92" fill="#222222"/>
<path d="M478.4 39.18 l1.4 1.5 l2.6 -3.6" fill="none" stroke="#f4f4f4" stroke-width="0.95" stroke-linecap="round" stroke-linejoin="round"/>
<path d="M485.4 36.28 h1.3 q0.4 3.2 3.4 3.8 v0.5 h-4.7 z" fill="#6fa79a" stroke="none" stroke-width="0.6"/>
<rect x="485.2" y="40.68" width="5" height="0.8" fill="#8fb0b4"/>
<path d="M478.4 47.1 l1.4 1.5 l2.6 -3.6" fill="none" stroke="#f4f4f4" stroke-width="0.95" stroke-linecap="round" stroke-linejoin="round"/>
<path d="M485.7 44.7 h1.2 l0.7 0.9 l0.7 -0.9 h1.2 v3.7 h-3.8 z" fill="#3f8f5c" stroke="none" stroke-width="0.6"/>
<rect x="485.2" y="48.6" width="5" height="0.8" fill="#c4ccc6"/>
<path d="M478.4 55.02 l1.4 1.5 l2.6 -3.6" fill="none" stroke="#f4f4f4" stroke-width="0.95" stroke-linecap="round" stroke-linejoin="round"/>
<polygon points="486.3,52.52 489.1,52.52 490.1,56.32 485.3,56.32" fill="#3f8f5c"/>
<rect x="485.2" y="56.52" width="5" height="0.8" fill="#c4ccc6"/>
<path d="M478.4 62.94 l1.4 1.5 l2.6 -3.6" fill="none" stroke="#f4f4f4" stroke-width="0.95" stroke-linecap="round" stroke-linejoin="round"/>
<polygon points="487.1,59.84 488.3,59.84 489.4,64.24 486,64.24" fill="#3f8f5c"/>
<rect x="485.2" y="64.44" width="5" height="0.8" fill="#c4ccc6"/>
<rect x="684.5" y="26.4" width="5.8" height="41.5" fill="#2f2f2f"/>
<polygon points="685.7,30.1 689.1,30.1 687.4,28" fill="#d0d0d0"/>
<polygon points="685.7,64.9 689.1,64.9 687.4,67" fill="#d0d0d0"/>
<rect x="685.4" y="37.7" width="4" height="25" fill="#5a5a5a" rx="0.8"/>
<rect x="545.5" y="70.2" width="75" height="1" fill="#4e4e4e"/>
<rect x="471.5" y="74.2" width="223.9" height="8.3" fill="#5d5d5d"/>
<polygon points="474.5,76.45 479.5,76.45 477,79.25" fill="#f2f2f2"/>
<rect x="533.7" y="86.2" width="141.4" height="7.15" fill="#2b2b2b"/>
<rect x="680.1" y="87.75" width="1.2" height="3.9" fill="#c6c6c6"/>
<path d="M681.75 87.75 h3.8 v1.3 h-1.6 v1.3 h1.6 v1.3 h-3.8 z" fill="#c6c6c6" stroke="none" stroke-width="0.6"/>
<polygon points="688.8,87.6 693.4,87.6 691.1,90.3" fill="#f2f2f2"/>
<rect x="533.7" y="99.1" width="141.4" height="7.15" fill="#2b2b2b"/>
<rect x="680.1" y="100.65" width="1.2" height="3.9" fill="#c6c6c6"/>
<path d="M681.75 100.65 h3.8 v1.3 h-1.6 v1.3 h1.6 v1.3 h-3.8 z" fill="#c6c6c6" stroke="none" stroke-width="0.6"/>
<polygon points="688.8,100.5 693.4,100.5 691.1,103.2" fill="#f2f2f2"/>
<circle cx="535.8" cy="114.4" r="2.3" fill="#2b2b2b" stroke="none" stroke-width="0.6"/>
<circle cx="573.9" cy="114.4" r="2.3" fill="#2b2b2b" stroke="none" stroke-width="0.6"/>
<circle cx="573.9" cy="114.4" r="1.25" fill="#f0f0f0" stroke="none" stroke-width="0.6"/>
<rect x="470.6" y="121.4" width="227" height="2.8" fill="#3e3e3e"/>
<rect x="471.5" y="126.1" width="223.9" height="8.3" fill="#5d5d5d"/>
<polygon points="474.5,128.35 479.5,128.35 477,131.15" fill="#f2f2f2"/>
<polygon points="650.9,141.3 655.1,139.4 655.1,143.2" fill="#e8e8e8"/>
<rect x="655.1" y="139.6" width="2" height="3.4" fill="#22b8cc"/>
<polygon points="661.2,141.3 665.4,139.4 665.4,143.2" fill="#e8e8e8"/>
<rect x="665.4" y="139.6" width="2" height="3.4" fill="#22b8cc"/>
<polygon points="671.6,141.5 674.4,139.6 676.4,141.5 674.4,143.4" fill="#e8e8e8"/>
<circle cx="676.7" cy="139.3" r="1.1" fill="#22b8cc" stroke="none" stroke-width="0.6"/>
<path d="M682 138.3 h2.6 l0.8 0.9 h3.8 v5 h-7.2 z" fill="#dddddd" stroke="none" stroke-width="0.6"/>
<path d="M683.1 141.6 h5.2" fill="none" stroke="#777" stroke-width="0.7"/>
<path d="M687.9 143.4 l1.6 1.4" fill="none" stroke="#eee" stroke-width="0.9"/>
<rect x="476.3" y="150" width="214" height="42" fill="#2b2b2b"/>
<rect x="476.8" y="150.6" width="207.7" height="8.12" fill="#5285a6"/>
<rect x="476.9" y="150.8" width="207.4" height="7.72" fill="none" stroke="#b9cbd8" stroke-width="0.45" stroke-opacity="0.7"/>
<rect x="477.3" y="151.2" width="5.6" height="6.92" fill="#222222"/>
<path d="M478.4 154.86 l1.4 1.5 l2.6 -3.6" fill="none" stroke="#f4f4f4" stroke-width="0.95" stroke-linecap="round" stroke-linejoin="round"/>
<path d="M485.4 151.96 h1.3 q0.4 3.2 3.4 3.8 v0.5 h-4.7 z" fill="#6fa79a" stroke="none" stroke-width="0.6"/>
<rect x="485.2" y="156.36" width="5" height="0.8" fill="#8fb0b4"/>
<path d="M478.4 162.78 l1.4 1.5 l2.6 -3.6" fill="none" stroke="#f4f4f4" stroke-width="0.95" stroke-linecap="round" stroke-linejoin="round"/>
<path d="M485.4 159.88 h1.3 q0.4 3.2 3.4 3.8 v0.5 h-4.7 z" fill="#3f8f5c" stroke="none" stroke-width="0.6"/>
<rect x="485.2" y="164.28" width="5" height="0.8" fill="#c4ccc6"/>
<path d="M478.4 170.7 l1.4 1.5 l2.6 -3.6" fill="none" stroke="#f4f4f4" stroke-width="0.95" stroke-linecap="round" stroke-linejoin="round"/>
<path d="M485.7 168.3 h1.2 l0.7 0.9 l0.7 -0.9 h1.2 v3.7 h-3.8 z" fill="#3f8f5c" stroke="none" stroke-width="0.6"/>
<rect x="485.2" y="172.2" width="5" height="0.8" fill="#c4ccc6"/>
<path d="M478.4 178.62 l1.4 1.5 l2.6 -3.6" fill="none" stroke="#f4f4f4" stroke-width="0.95" stroke-linecap="round" stroke-linejoin="round"/>
<polygon points="486.3,176.12 489.1,176.12 490.1,179.92 485.3,179.92" fill="#3f8f5c"/>
<rect x="485.2" y="180.12" width="5" height="0.8" fill="#c4ccc6"/>
<path d="M478.4 186.54 l1.4 1.5 l2.6 -3.6" fill="none" stroke="#f4f4f4" stroke-width="0.95" stroke-linecap="round" stroke-linejoin="round"/>
<polygon points="487.1,183.44 488.3,183.44 489.4,187.84 486,187.84" fill="#3f8f5c"/>
<rect x="485.2" y="188.04" width="5" height="0.8" fill="#c4ccc6"/>
<rect x="684.5" y="150" width="5.8" height="42" fill="#2f2f2f"/>
<polygon points="685.7,153.7 689.1,153.7 687.4,151.6" fill="#d0d0d0"/>
<polygon points="685.7,189 689.1,189 687.4,191.1" fill="#d0d0d0"/>
<rect x="685.4" y="161.3" width="4" height="25" fill="#5a5a5a" rx="0.8"/>
<rect x="545.5" y="193.8" width="75" height="1" fill="#4e4e4e"/>
<rect x="471.5" y="197.3" width="223.9" height="8.7" fill="#5d5d5d"/>
<polygon points="474.5,199.75 479.5,199.75 477,202.55" fill="#f2f2f2"/>
<rect x="533.7" y="209.8" width="141.4" height="7.15" fill="#2b2b2b"/>
<rect x="680.1" y="211.35" width="1.2" height="3.9" fill="#c6c6c6"/>
<path d="M681.75 211.35 h3.8 v1.3 h-1.6 v1.3 h1.6 v1.3 h-3.8 z" fill="#c6c6c6" stroke="none" stroke-width="0.6"/>
<polygon points="688.8,211.2 693.4,211.2 691.1,213.9" fill="#f2f2f2"/>
<rect x="533.7" y="222.7" width="141.4" height="7.15" fill="#2b2b2b"/>
<rect x="680.1" y="224.25" width="1.2" height="3.9" fill="#c6c6c6"/>
<path d="M681.75 224.25 h3.8 v1.3 h-1.6 v1.3 h1.6 v1.3 h-3.8 z" fill="#c6c6c6" stroke="none" stroke-width="0.6"/>
<polygon points="688.8,224.1 693.4,224.1 691.1,226.8" fill="#f2f2f2"/>
<circle cx="535.8" cy="238" r="2.3" fill="#2b2b2b" stroke="none" stroke-width="0.6"/>
<circle cx="573.9" cy="238" r="2.3" fill="#2b2b2b" stroke="none" stroke-width="0.6"/>
<circle cx="573.9" cy="238" r="1.25" fill="#f0f0f0" stroke="none" stroke-width="0.6"/>
<rect x="470.6" y="243.2" width="235.4" height="220.8" fill="#434343"/>
</svg>
<div id="labels">
<span class="t" style="top:4px;color:#e8e8e8;font-weight:bold;letter-spacing:-0.22px;left:17.7px;">Modifiers</span>
<span class="t" style="top:28px;color:#e4e4e4;letter-spacing:-0.15px;left:25.8px;">Cut2</span>
<span class="t" style="top:36px;color:#e4e4e4;letter-spacing:-0.15px;left:25.8px;">Cut1</span>
<span class="t" style="top:44px;color:#e4e4e4;letter-spacing:-0.15px;left:25.8px;">Coil1</span>
<span class="t" style="top:52px;color:#e4e4e4;letter-spacing:-0.15px;left:25.8px;">Noise1</span>
<span class="t" style="top:60px;color:#f4f4f4;letter-spacing:-0.15px;left:25.8px;">Clumping1</span>
<span class="t" style="top:75px;color:#e8e8e8;font-weight:bold;letter-spacing:-0.22px;left:17.7px;">Clumping Modifier</span>
<span class="t" style="top:87px;color:#bdbdbd;letter-spacing:-0.12px;right:638.98px;text-align:right;">Mask</span>
<span class="t" style="top:87px;color:#d8d8d8;left:67.9px;">1.0</span>
<span class="t" style="top:99px;color:#e8e8e8;font-weight:bold;letter-spacing:-0.22px;left:18.3px;">Clump Effect</span>
<span class="t" style="top:110px;color:#bdbdbd;letter-spacing:-0.12px;right:638.28px;text-align:right;">Clump</span>
<span class="t" style="top:110px;color:#d8d8d8;left:69.7px;">rand(0.5,1)</span>
<span class="t" style="top:125px;color:#bdbdbd;letter-spacing:-0.12px;right:638.48px;text-align:right;">Clump Scale</span>
<span class="t" style="top:139px;color:#f5f5f5;left:74.5px;">R</span>
<span class="t" style="top:139px;color:#f5f5f5;right:493.25px;text-align:right;">T</span>
<span class="t" style="top:166px;color:#bdbdbd;letter-spacing:-0.03px;left:68.9px;">Interpolation:</span>
<span class="t" style="top:166px;color:#d8d8d8;left:103.3px;">Linear</span>
<span class="t" style="top:166px;color:#bdbdbd;left:136.3px;">Value:</span>
<span class="t" style="top:166px;color:#d8d8d8;left:153.2px;">0.921</span>
<span class="t" style="top:166px;color:#bdbdbd;left:172.5px;">Position:</span>
<span class="t" style="top:166px;color:#d8d8d8;left:195px;">0.000</span>
<span class="t" style="top:176px;color:#bdbdbd;left:75.8px;">Clump Volumize</span>
<span class="t" style="top:186px;color:#bdbdbd;letter-spacing:-0.12px;right:638.48px;text-align:right;">Clump Variance</span>
<span class="t" style="top:186px;color:#d8d8d8;left:69.7px;">.5</span>
<span class="t" style="top:199px;color:#e8e8e8;font-weight:bold;letter-spacing:-0.22px;left:18.3px;">Copy Effect</span>
<span class="t" style="top:209px;color:#e8e8e8;font-weight:bold;letter-spacing:-0.22px;left:18.3px;">Cut Effect</span>
<span class="t" style="top:220px;color:#bdbdbd;letter-spacing:-0.12px;right:638.28px;text-align:right;">Cut</span>
<span class="t" style="top:220px;color:#d8d8d8;left:69.7px;">rand(0.1,0.4)</span>
<span class="t" style="top:233px;color:#e8e8e8;font-weight:bold;letter-spacing:-0.22px;left:18.3px;">Noise Effect</span>
<span class="t" style="top:243px;color:#e8e8e8;font-weight:bold;letter-spacing:-0.22px;left:18.3px;">Frame Offset</span>
<span class="t" style="top:253px;color:#e8e8e8;font-weight:bold;letter-spacing:-0.22px;left:18.3px;">Flatness Effect</span>
<span class="t" style="top:263px;color:#e8e8e8;font-weight:bold;letter-spacing:-0.22px;left:18.3px;">Offset Effect</span>
<span class="t" style="top:275px;color:#bdbdbd;letter-spacing:-0.12px;right:638.28px;text-align:right;">Offset</span>
<span class="t" style="top:275px;color:#d8d8d8;left:69.7px;">0.0</span>
<span class="t" style="top:289px;color:#bdbdbd;letter-spacing:-0.12px;right:638.48px;text-align:right;">Offset Scale</span>
<span class="t" style="top:303px;color:#f5f5f5;left:74.5px;">R</span>
<span class="t" style="top:303px;color:#f5f5f5;right:493.25px;text-align:right;">T</span>
<span class="t" style="top:330px;color:#bdbdbd;letter-spacing:-0.03px;left:68.9px;">Interpolation:</span>
<span class="t" style="top:330px;color:#d8d8d8;left:103.3px;">Spline</span>
<span class="t" style="top:330px;color:#bdbdbd;left:136.3px;">Value:</span>
<span class="t" style="top:330px;color:#d8d8d8;left:153.2px;">0.000</span>
<span class="t" style="top:330px;color:#bdbdbd;left:172.5px;">Position:</span>
<span class="t" style="top:330px;color:#d8d8d8;left:195px;">0.000</span>
<span class="t" style="top:341px;color:#e8e8e8;font-weight:bold;letter-spacing:-0.22px;left:18.3px;">Curl Effect</span>
<span class="t" style="top:353px;color:#bdbdbd;letter-spacing:-0.12px;right:638.28px;text-align:right;">Curl</span>
<span class="t" style="top:353px;color:#d8d8d8;left:69.7px;">rand(1,5)</span>
<span class="t" style="top:368px;color:#bdbdbd;letter-spacing:-0.12px;right:638.48px;text-align:right;">Curl Scale</span>
<span class="t" style="top:382px;color:#f5f5f5;left:74.5px;">R</span>
<span class="t" style="top:382px;color:#f5f5f5;right:493.25px;text-align:right;">T</span>
<span class="t" style="top:409px;color:#bdbdbd;letter-spacing:-0.03px;left:68.9px;">Interpolation:</span>
<span class="t" style="top:409px;color:#d8d8d8;left:103.3px;">Spline</span>
<span class="t" style="top:409px;color:#bdbdbd;left:136.3px;">Value:</span>
<span class="t" style="top:409px;color:#d8d8d8;left:153.2px;">0.000</span>
<span class="t" style="top:409px;color:#bdbdbd;left:172.5px;">Position:</span>
<span class="t" style="top:409px;color:#d8d8d8;left:195px;">0.000</span>
<span class="t" style="top:419px;color:#bdbdbd;letter-spacing:-0.12px;right:639.08px;text-align:right;">Options</span>
<span class="t" style="top:419px;color:#bdbdbd;left:74.9px;">Color Preview</span>
<span class="t" style="top:419px;color:#bdbdbd;left:122px;">Cv Attr</span>
<span class="t" style="left:187.4px;top:431.3px;width:34.6px;height:6.9px;overflow:hidden;text-align:center;color:#e0e0e0;line-height:15px;letter-spacing:-0.2px;">Setup Maps...</span>
<span class="t" style="top:447px;color:#e8e8e8;font-weight:bold;letter-spacing:-0.22px;left:15.6px;">Log</span>
<span class="t" style="top:4px;color:#e8e8e8;font-weight:bold;letter-spacing:-0.22px;left:252.7px;">Modifiers</span>
<span class="t" style="top:28px;color:#e4e4e4;letter-spacing:-0.15px;left:260.5px;">Cut2</span>
<span class="t" style="top:36px;color:#e4e4e4;letter-spacing:-0.15px;left:260.5px;">Cut1</span>
<span class="t" style="top:44px;color:#e4e4e4;letter-spacing:-0.15px;left:260.5px;">Coil1</span>
<span class="t" style="top:52px;color:#f4f4f4;letter-spacing:-0.15px;left:260.5px;">Noise1</span>
<span class="t" style="top:60px;color:#e4e4e4;letter-spacing:-0.15px;left:260.5px;">Clumping1</span>
<span class="t" style="top:75px;color:#e8e8e8;font-weight:bold;letter-spacing:-0.22px;left:252.7px;">Noise Modifier</span>
<span class="t" style="top:87px;color:#bdbdbd;letter-spacing:-0.12px;right:404.28px;text-align:right;">Mask</span>
<span class="t" style="top:87px;color:#d8d8d8;left:303.5px;">1.0</span>
<span class="t" style="top:100px;color:#bdbdbd;letter-spacing:-0.12px;right:404.28px;text-align:right;">Frequency</span>
<span class="t" style="top:100px;color:#d8d8d8;left:303.5px;">1.0</span>
<span class="t" style="top:113px;color:#bdbdbd;letter-spacing:-0.12px;right:404.28px;text-align:right;">Magnitude</span>
<span class="t" style="top:113px;color:#d8d8d8;left:303.5px;">rand(0.1,0.5)</span>
<span class="t" style="top:128px;color:#bdbdbd;letter-spacing:-0.12px;right:404.68px;text-align:right;">Magnitude Scale</span>
<span class="t" style="top:142px;color:#f5f5f5;left:308.6px;">R</span>
<span class="t" style="top:142px;color:#f5f5f5;right:252.45px;text-align:right;">T</span>
<span class="t" style="top:168px;color:#bdbdbd;letter-spacing:-0.03px;left:302.9px;">Interpolation:</span>
<span class="t" style="top:168px;color:#d8d8d8;left:337.3px;">Linear</span>
<span class="t" style="top:168px;color:#bdbdbd;left:370.3px;">Value:</span>
<span class="t" style="top:168px;color:#d8d8d8;left:387.2px;">0.000</span>
<span class="t" style="top:168px;color:#bdbdbd;left:406.5px;">Position:</span>
<span class="t" style="top:168px;color:#d8d8d8;left:429px;">0.000</span>
<span class="t" style="top:180px;color:#bdbdbd;letter-spacing:-0.12px;right:404.28px;text-align:right;">Correlation</span>
<span class="t" style="top:180px;color:#d8d8d8;left:303.5px;">0.0</span>
<span class="t" style="top:193px;color:#bdbdbd;letter-spacing:-0.12px;right:404.28px;text-align:right;">Preserve Length</span>
<span class="t" style="top:193px;color:#d8d8d8;left:303.5px;">0.0</span>
<span class="t" style="top:206px;color:#e8e8e8;font-weight:bold;letter-spacing:-0.22px;left:252.7px;">Modifiers</span>
<span class="t" style="top:231px;color:#e4e4e4;letter-spacing:-0.15px;left:260.5px;">Cut2</span>
<span class="t" style="top:239px;color:#e4e4e4;letter-spacing:-0.15px;left:260.5px;">Cut1</span>
<span class="t" style="top:247px;color:#f4f4f4;letter-spacing:-0.15px;left:260.5px;">Coil1</span>
<span class="t" style="top:255px;color:#e4e4e4;letter-spacing:-0.15px;left:260.5px;">Noise1</span>
<span class="t" style="top:262px;color:#e4e4e4;letter-spacing:-0.15px;left:260.5px;">Clumping1</span>
<span class="t" style="top:278px;color:#e8e8e8;font-weight:bold;letter-spacing:-0.22px;left:252.7px;">Coil Modifier</span>
<span class="t" style="top:289px;color:#bdbdbd;letter-spacing:-0.12px;right:404.28px;text-align:right;">Mask</span>
<span class="t" style="top:289px;color:#d8d8d8;left:303.5px;">1.0</span>
<span class="t" style="top:302px;color:#bdbdbd;letter-spacing:-0.12px;right:404.28px;text-align:right;">Count</span>
<span class="t" style="top:302px;color:#d8d8d8;left:303.5px;">rand(0.5,6)</span>
<span class="t" style="top:317px;color:#bdbdbd;letter-spacing:-0.12px;right:404.68px;text-align:right;">Count Scale</span>
<span class="t" style="top:332px;color:#f5f5f5;left:308.6px;">R</span>
<span class="t" style="top:332px;color:#f5f5f5;right:252.45px;text-align:right;">T</span>
<span class="t" style="top:358px;color:#bdbdbd;letter-spacing:-0.03px;left:302.9px;">Interpolation:</span>
<span class="t" style="top:358px;color:#d8d8d8;left:337.3px;">Spline</span>
<span class="t" style="top:358px;color:#bdbdbd;left:370.3px;">Value:</span>
<span class="t" style="top:358px;color:#d8d8d8;left:387.2px;">0.105</span>
<span class="t" style="top:358px;color:#bdbdbd;left:406.5px;">Position:</span>
<span class="t" style="top:358px;color:#d8d8d8;left:429px;">0.000</span>
<span class="t" style="top:370px;color:#bdbdbd;letter-spacing:-0.12px;right:404.28px;text-align:right;">Radius</span>
<span class="t" style="top:370px;color:#d8d8d8;left:303.5px;">rand(0.1,0.5)</span>
<span class="t" style="top:384px;color:#bdbdbd;letter-spacing:-0.12px;right:404.68px;text-align:right;">Radius Scale</span>
<span class="t" style="top:399px;color:#f5f5f5;left:308.6px;">R</span>
<span class="t" style="top:399px;color:#f5f5f5;right:252.55px;text-align:right;">T</span>
<span class="t" style="top:425px;color:#bdbdbd;letter-spacing:-0.03px;left:302.9px;">Interpolation:</span>
<span class="t" style="top:425px;color:#d8d8d8;left:337.3px;">Spline</span>
<span class="t" style="top:425px;color:#bdbdbd;left:370.3px;">Value:</span>
<span class="t" style="top:425px;color:#d8d8d8;left:387.2px;">0.000</span>
<span class="t" style="top:425px;color:#bdbdbd;left:406.5px;">Position:</span>
<span class="t" style="top:425px;color:#d8d8d8;left:429px;">0.000</span>
<span class="t" style="top:4px;color:#e8e8e8;font-weight:bold;letter-spacing:-0.22px;left:484.2px;">Modifiers</span>
<span class="t" style="top:28px;color:#e4e4e4;letter-spacing:-0.15px;left:492.1px;">Cut2</span>
<span class="t" style="top:36px;color:#f4f4f4;letter-spacing:-0.15px;left:492.1px;">Cut1</span>
<span class="t" style="top:44px;color:#e4e4e4;letter-spacing:-0.15px;left:492.1px;">Coil1</span>
<span class="t" style="top:52px;color:#e4e4e4;letter-spacing:-0.15px;left:492.1px;">Noise1</span>
<span class="t" style="top:60px;color:#e4e4e4;letter-spacing:-0.15px;left:492.1px;">Clumping1</span>
<span class="t" style="top:76px;color:#e8e8e8;font-weight:bold;letter-spacing:-0.22px;left:484.2px;">Cut Modifier</span>
<span class="t" style="top:87px;color:#bdbdbd;letter-spacing:-0.12px;right:173.08px;text-align:right;">Mask</span>
<span class="t" style="top:87px;color:#d8d8d8;left:535.2px;">1.0</span>
<span class="t" style="top:100px;color:#bdbdbd;letter-spacing:-0.12px;right:173.08px;text-align:right;">Amount</span>
<span class="t" style="top:100px;color:#d8d8d8;left:535.2px;">stray()</span>
<span class="t" style="top:112px;color:#bdbdbd;letter-spacing:-0.12px;right:173.08px;text-align:right;">Rebuild Type</span>
<span class="t" style="top:112px;color:#bdbdbd;left:541.4px;">Keep Param</span>
<span class="t" style="top:112px;color:#bdbdbd;left:579.5px;">Reparam</span>
<span class="t" style="top:128px;color:#e8e8e8;font-weight:bold;letter-spacing:-0.22px;left:484.2px;">Modifiers</span>
<span class="t" style="top:152px;color:#f4f4f4;letter-spacing:-0.15px;left:492.1px;">Cut2</span>
<span class="t" style="top:160px;color:#e4e4e4;letter-spacing:-0.15px;left:492.1px;">Cut1</span>
<span class="t" style="top:168px;color:#e4e4e4;letter-spacing:-0.15px;left:492.1px;">Coil1</span>
<span class="t" style="top:176px;color:#e4e4e4;letter-spacing:-0.15px;left:492.1px;">Noise1</span>
<span class="t" style="top:184px;color:#e4e4e4;letter-spacing:-0.15px;left:492.1px;">Clumping1</span>
<span class="t" style="top:199px;color:#e8e8e8;font-weight:bold;letter-spacing:-0.22px;left:484.2px;">Cut Modifier</span>
<span class="t" style="top:211px;color:#bdbdbd;letter-spacing:-0.12px;right:173.08px;text-align:right;">Mask</span>
<span class="t" style="top:211px;color:#d8d8d8;left:535.2px;">1.0</span>
<span class="t" style="top:224px;color:#bdbdbd;letter-spacing:-0.12px;right:173.08px;text-align:right;">Amount</span>
<span class="t" style="top:224px;color:#d8d8d8;left:535.2px;">rand(0.0,0.2)</span>
<span class="t" style="top:235px;color:#bdbdbd;letter-spacing:-0.12px;right:173.08px;text-align:right;">Rebuild Type</span>
<span class="t" style="top:235px;color:#bdbdbd;left:541.4px;">Keep Param</span>
<span class="t" style="top:235px;color:#bdbdbd;left:579.5px;">Reparam</span>
</div>
</body>
</html>
